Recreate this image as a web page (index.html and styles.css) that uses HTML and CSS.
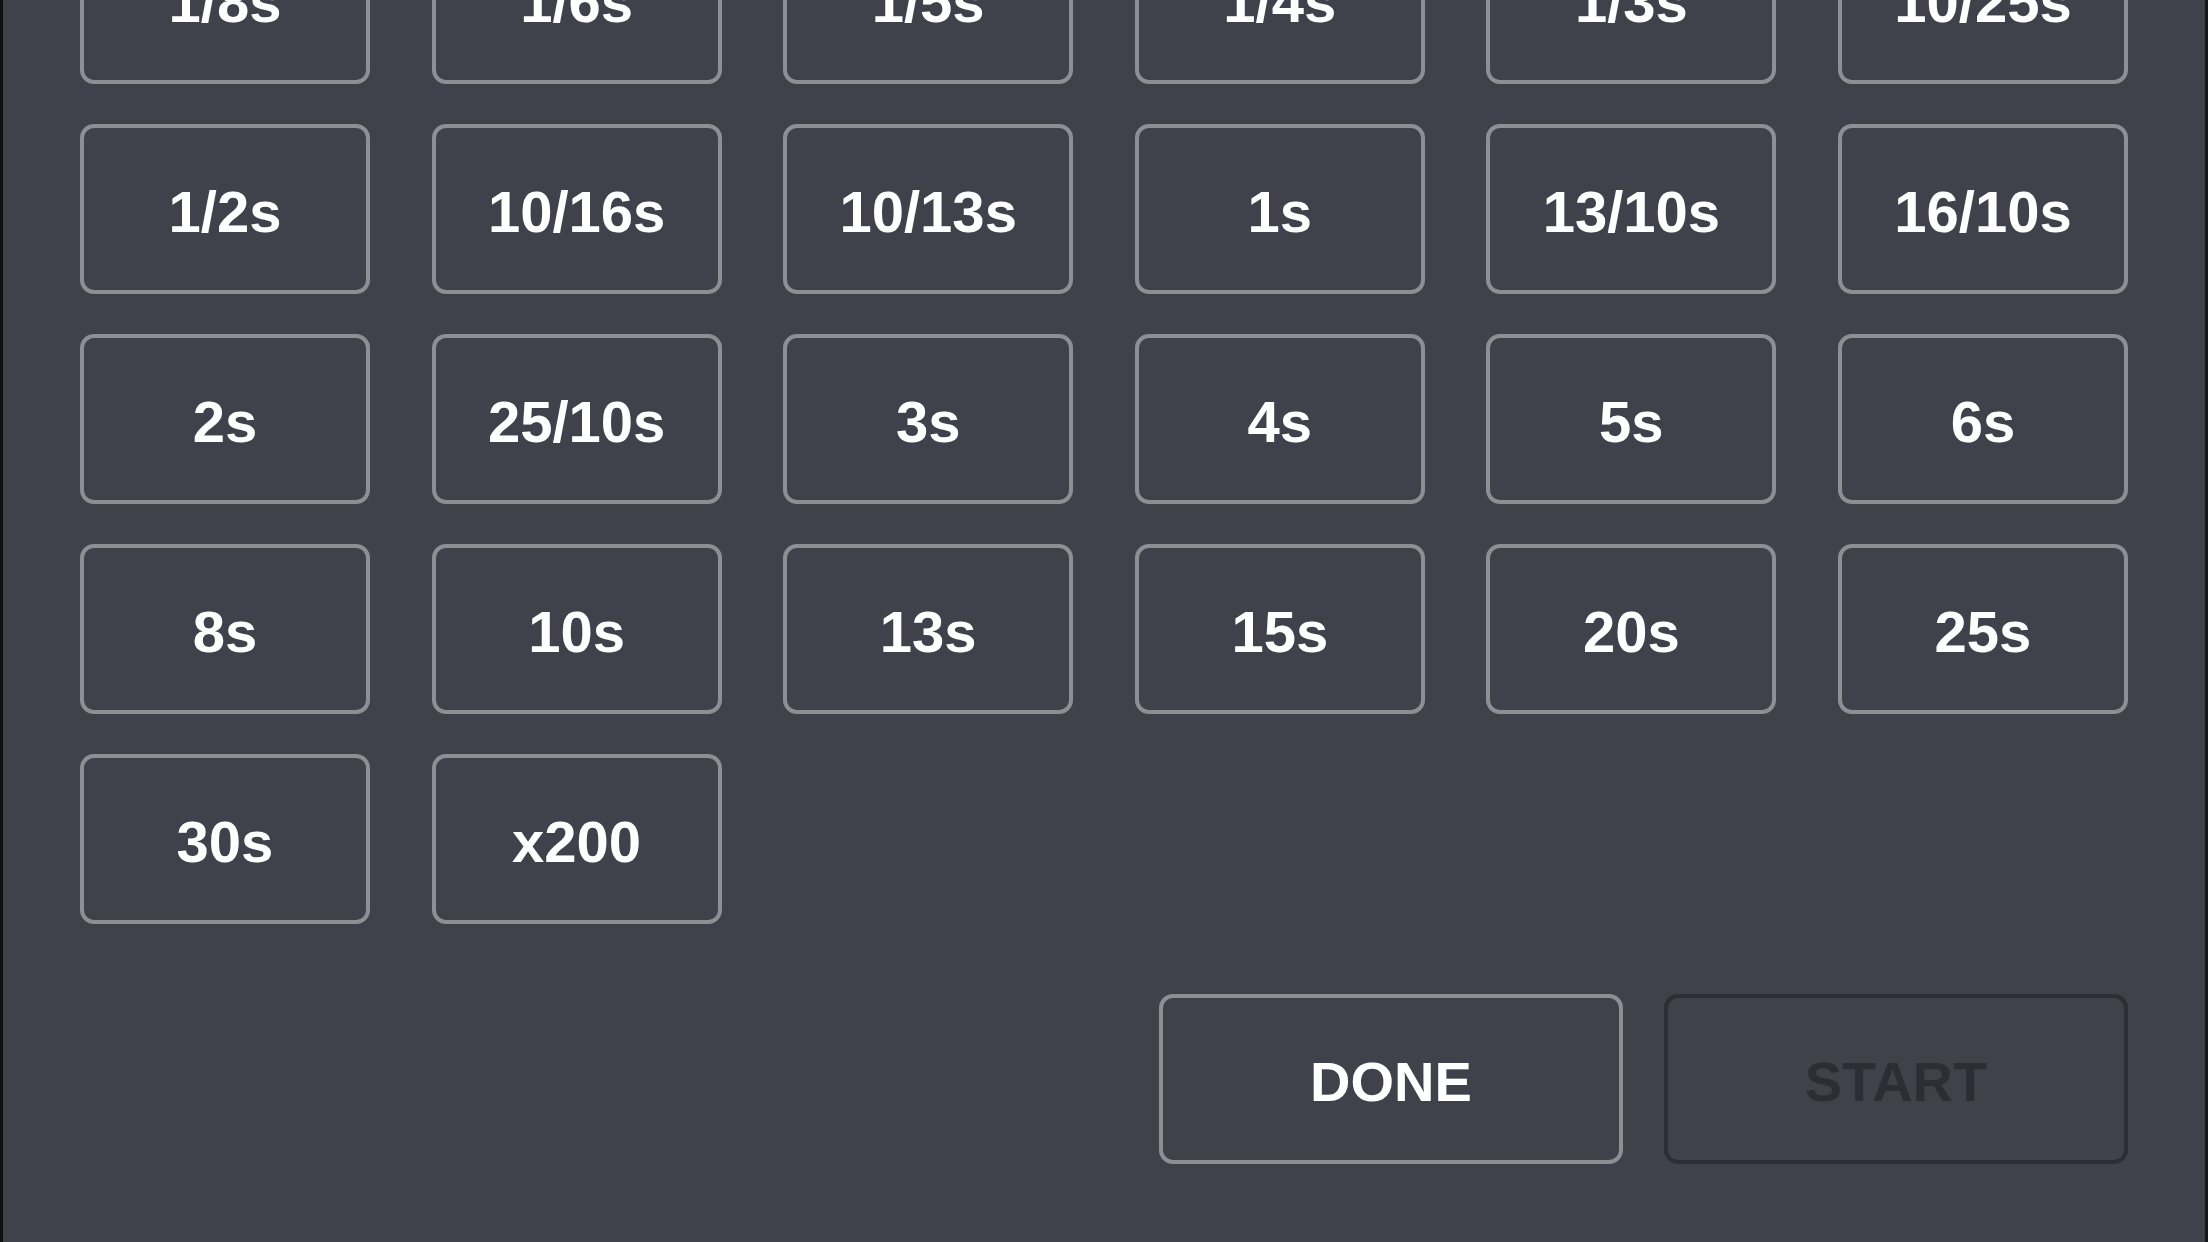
FILE: index.html
```html
<!DOCTYPE html>
<html>
<head>
<meta charset="utf-8">
<link rel="stylesheet" href="styles.css">
</head>
<body>
<div class="screen">
  <div class="grid">
    <div class="opt">1/8s</div>
    <div class="opt">1/6s</div>
    <div class="opt">1/5s</div>
    <div class="opt">1/4s</div>
    <div class="opt">1/3s</div>
    <div class="opt">10/25s</div>
    <div class="opt">1/2s</div>
    <div class="opt">10/16s</div>
    <div class="opt">10/13s</div>
    <div class="opt">1s</div>
    <div class="opt">13/10s</div>
    <div class="opt">16/10s</div>
    <div class="opt">2s</div>
    <div class="opt">25/10s</div>
    <div class="opt">3s</div>
    <div class="opt">4s</div>
    <div class="opt">5s</div>
    <div class="opt">6s</div>
    <div class="opt">8s</div>
    <div class="opt">10s</div>
    <div class="opt">13s</div>
    <div class="opt">15s</div>
    <div class="opt">20s</div>
    <div class="opt">25s</div>
    <div class="opt">30s</div>
    <div class="opt">x200</div>
  </div>
  <div class="actions">
    <div class="action">DONE</div>
    <div class="action disabled">START</div>
  </div>
</div>
</body>
</html>
```
FILE: styles.css
```css
* { box-sizing: border-box; }
html, body {
  margin: 0;
  padding: 0;
  width: 2208px;
  height: 1242px;
  overflow: hidden;
  background: #41414b;
}
.screen {
  width: 2208px;
  height: 1242px;
  display: flex;
  flex-direction: column;
  overflow: hidden;
  background: #41414b;
  border-left: 3px solid #111114;
  border-right: 3px solid #17171b;
  padding: 0 77px 0 77px;
  font-family: "Liberation Sans", Arial, sans-serif;
  font-weight: bold;
  color: #ffffff;
}
.grid {
  margin-top: -86px;
  display: grid;
  grid-template-columns: repeat(6, 290px);
  grid-auto-rows: 170px;
  column-gap: 61.6px;
  row-gap: 40px;
}
.opt, .action {
  border: 4px solid #8e8e94;
  border-radius: 14px;
  display: flex;
  align-items: center;
  justify-content: center;
  padding-top: 6px;
  font-size: 58px;
  line-height: 1;
}
.actions {
  margin-top: 70px;
  display: flex;
  justify-content: flex-end;
  gap: 41px;
}
.action {
  width: 464px;
  height: 170px;
  font-size: 56px;
}
.action.disabled {
  border-color: #2b2e34;
  color: #2b2e34;
}
```
